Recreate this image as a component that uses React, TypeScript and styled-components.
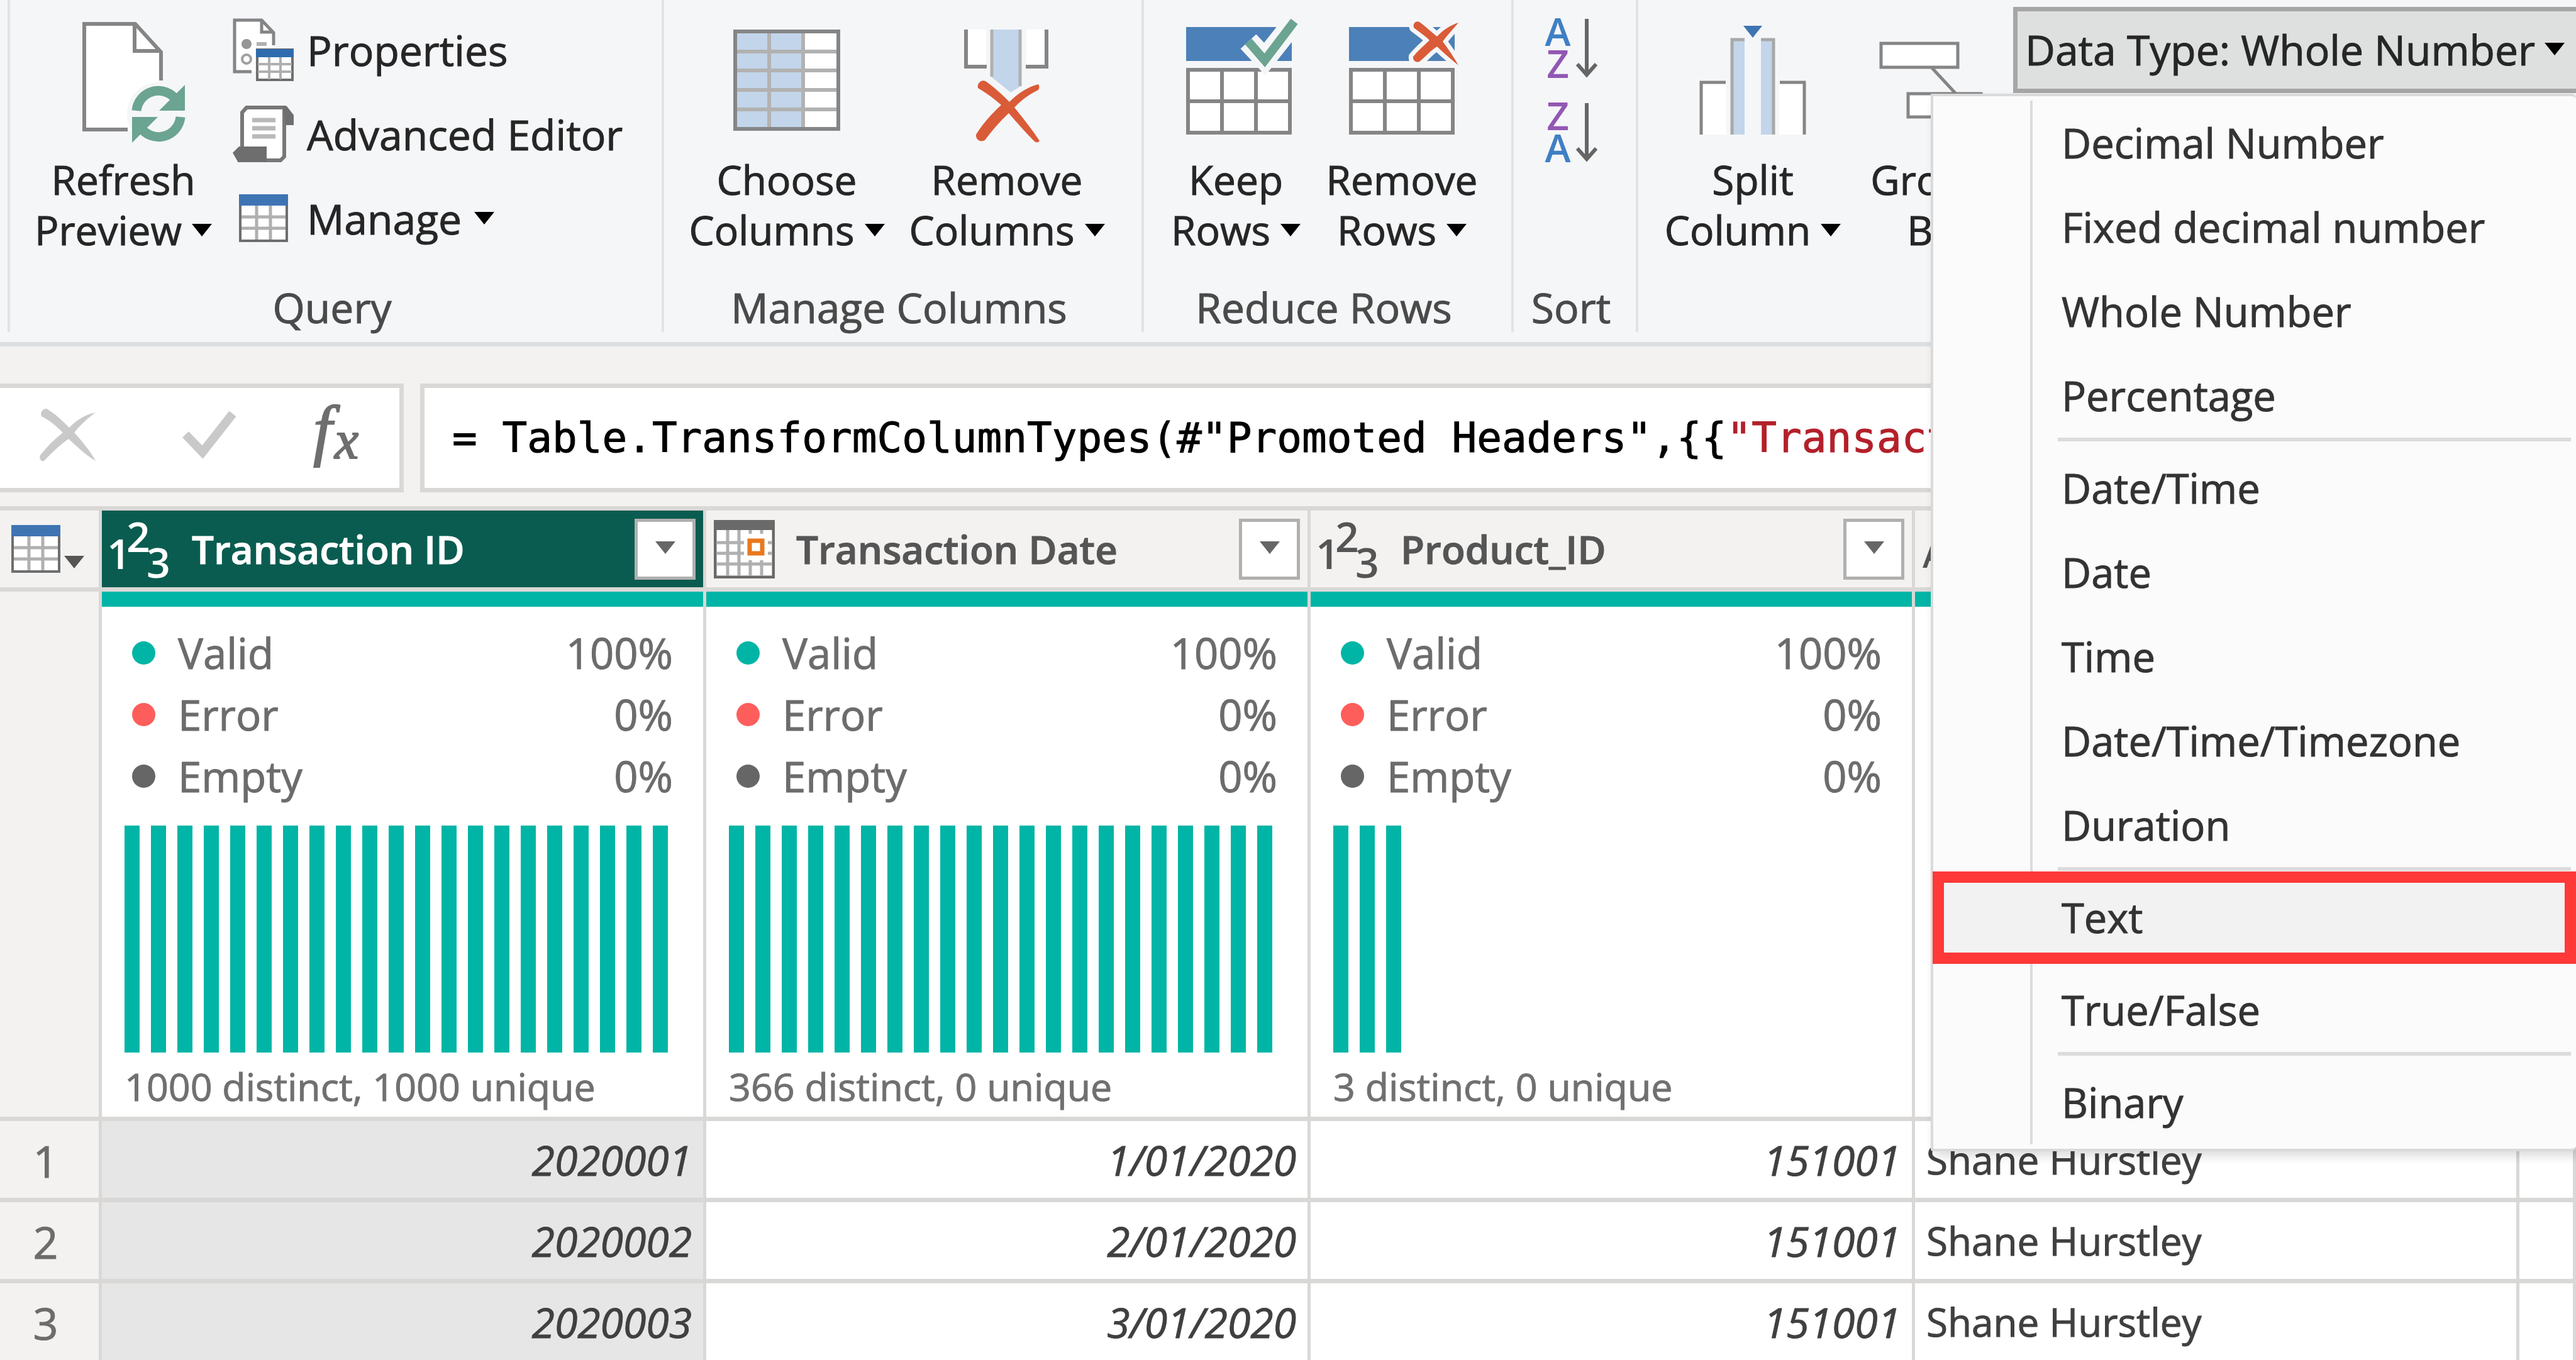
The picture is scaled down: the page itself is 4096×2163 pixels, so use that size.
import React, { useState } from "react";
import styled, { createGlobalStyle } from "styled-components";

const ui = `"Open Sans", "Noto Sans", sans-serif`;
const teal = "#00b5a6";
const line = "#d9d8d6";
const grey = "#858585";
const blue = "#4c80b8";
const pale = "#c2d5ea";

const GlobalStyle = createGlobalStyle`
  * { box-sizing: border-box; }
  body {
    margin: 0;
    background: #f3f2f1;
    font-family: ${ui};
    overflow: hidden;
    -webkit-text-stroke: 1px currentColor;
  }
  button, input { font: inherit; color: inherit; margin: 0; }
  svg { display: block; flex: none; }
`;

const Page = styled.div`
  min-height: 100vh;
  display: flex;
  flex-direction: column;
`;

/* ---------- ribbon ---------- */

const Ribbon = styled.div`
  display: flex;
  height: 551px;
  padding: 0 0 16px 12px;
  background: #f5f6f8;
  border-bottom: 7px solid #dcdfe0;
`;

const Group = styled.section<{ $w?: number }>`
  flex: ${(p) => (p.$w ? `0 0 ${p.$w}px` : "1 0 auto")};
  display: flex;
  flex-direction: column;
  border-left: 4px solid #e0e4e2;
`;

const GroupBody = styled.div<{ $pad: number; $center?: boolean }>`
  flex: 1;
  display: flex;
  align-items: flex-start;
  justify-content: ${(p) => (p.$center ? "center" : "flex-start")};
  padding-left: ${(p) => p.$pad}px;
`;

const GroupLabel = styled.h2`
  margin: 0;
  padding-right: 12px;
  height: 80px;
  font-size: 66px;
  font-weight: 400;
  line-height: 80px;
  text-align: center;
  color: #4a4a4a;
  white-space: nowrap;
`;

const BigButton = styled.button<{ $w: number }>`
  width: ${(p) => p.$w}px;
  padding: 0;
  border: 0;
  background: none;
  display: flex;
  flex-direction: column;
  align-items: center;
  font-size: 64px;
  line-height: 80px;
  color: #262626;
  white-space: nowrap;
`;

const LabelLine = styled.span`
  display: flex;
  align-items: center;
  gap: 16px;
`;

const SmallList = styled.div`
  display: flex;
  flex-direction: column;
  padding: 12px 0 0 24px;
`;

const SmallButton = styled.button`
  height: 134px;
  padding: 0;
  border: 0;
  background: none;
  display: flex;
  align-items: center;
  gap: 20px;
  font-size: 66px;
  line-height: 80px;
  color: #262626;
  white-space: nowrap;
`;

const IconSlot = styled.span`
  width: 98px;
  display: flex;
  justify-content: center;
`;

const SortList = styled.div`
  display: flex;
  flex-direction: column;
  gap: 36px;
  padding: 28px 12px 0 0;
`;

const IconButton = styled.button`
  padding: 0;
  border: 0;
  background: none;
`;

const TypeArea = styled.div`
  position: relative;
  flex: 1;
  padding-top: 11px;
`;

const TypeButton = styled.button`
  width: 100%;
  height: 137px;
  padding: 0 18px 4px 12px;
  border: 7px solid #a6a6a6;
  border-right: 0;
  background: #dedfdf;
  display: flex;
  align-items: center;
  justify-content: space-between;
  font-size: 66px;
  line-height: 80px;
  color: #262626;
  white-space: nowrap;
`;

/* ---------- drop-down menu ---------- */

const Menu = styled.ul`
  position: absolute;
  z-index: 2;
  top: 149px;
  left: -131px;
  right: 0;
  margin: 0;
  padding: 7px 0;
  list-style: none;
  border: 4px solid #dadada;
  border-right: 0;
  border-radius: 0 8px 8px 4px;
  background: linear-gradient(#dcdcdc, #dcdcdc) 154px 7px / 4px calc(100% - 14px) no-repeat #fbfbfb;
  box-shadow: 6px 8px 16px rgba(0, 0, 0, 0.14);
`;

const MenuItem = styled.li`
  position: relative;
`;

const MenuButton = styled.button<{ $hot: boolean }>`
  display: block;
  width: 100%;
  height: 134px;
  padding: 0 0 0 204px;
  border: 0;
  background: ${(p) => (p.$hot ? "#f2f2f2" : "none")};
  font-size: 65px;
  line-height: 132px;
  text-align: left;
  color: #333;
  white-space: nowrap;
`;

const Divider = styled.li`
  height: 13px;
  margin: 0 8px 0 198px;
  border-top: 6px solid #dcdcdc;
`;

const Highlight = styled.span`
  position: absolute;
  inset: -6px 0 -7px -1px;
  border: 18px solid #ff3838;
  pointer-events: none;
`;

/* ---------- formula bar ---------- */

const FormulaBar = styled.div`
  display: flex;
  gap: 26px;
  height: 173px;
  margin: 59px 0 22px;
`;

const FormulaTools = styled.div`
  display: flex;
  align-items: center;
  gap: 118px;
  width: 642px;
  padding: 0 0 10px 62px;
  border: 7px solid ${line};
  border-left: 0;
  background: #fff;
`;

const FormulaBox = styled.label`
  flex: 1;
  display: grid;
  align-items: center;
  border: 7px solid ${line};
  border-right: 0;
  background: #fff;
  padding-left: 44px;
  overflow: hidden;
  font: 66px/80px "DejaVu Sans Mono", "Liberation Mono", monospace;
  white-space: pre;
`;

const FormulaInput = styled.input`
  grid-area: 1 / 1;
  min-width: 0;
  padding: 0;
  border: 0;
  outline: 0;
  background: none;
  color: transparent;
  caret-color: #000;
  -webkit-text-stroke: 0;
`;

const FormulaText = styled.span`
  grid-area: 1 / 1;
  min-width: 0;
  color: #000;
  pointer-events: none;
`;

const StringLiteral = styled.span`
  color: #b3202a;
  -webkit-text-stroke: 1px #b3202a;
`;

/* ---------- grid ---------- */

const Grid = styled.table`
  width: 100%;
  table-layout: fixed;
  border-collapse: separate;
  border-spacing: 0;
  border-top: 7px solid ${line};
  background: #fff;
`;

const Col = styled.col<{ $w?: number }>`
  width: ${(p) => (p.$w ? `${p.$w}px` : "auto")};
`;

const HeadCell = styled.th<{ $selected?: boolean }>`
  height: 129px;
  padding: 0;
  border-right: 5px solid ${line};
  border-bottom: 7px solid ${line};
  background: ${(p) => (p.$selected ? "#0a5c50" : "#f3f2f1")};
  color: ${(p) => (p.$selected ? "#fff" : "#555")};
  font-size: 62px;
  font-weight: 600;
  line-height: 80px;
  text-align: left;
`;

const HeadInner = styled.div`
  display: flex;
  align-items: center;
  padding: 0 12px;
  white-space: nowrap;
  overflow: hidden;
`;

const HeadName = styled.span`
  flex: 1;
  padding-left: 34px;
`;

const FilterButton = styled.button`
  width: 97px;
  height: 97px;
  padding: 0 0 4px;
  border: 5px solid #b0b0b0;
  background: #fff;
  display: flex;
  align-items: center;
  justify-content: center;
`;

const CornerButton = styled.button`
  display: flex;
  align-items: flex-end;
  gap: 6px;
  padding: 0 0 0 18px;
  border: 0;
  background: none;

  svg:last-child {
    margin-bottom: 7px;
  }
`;

const ProfileCell = styled.td`
  height: 842px;
  padding: 0;
  vertical-align: top;
  border-right: 5px solid ${line};
  border-bottom: 7px solid ${line};
`;

const QualityBar = styled.div`
  height: 24px;
  background: ${teal};
`;

const Quality = styled.dl`
  margin: 0;
  padding: 24px 48px 0;
`;

const QualityRow = styled.div`
  display: flex;
  align-items: center;
  height: 98px;
  font-size: 67px;
  line-height: 80px;
  color: #6c6c6c;
`;

const Dot = styled.span<{ $color: string }>`
  width: 37px;
  height: 37px;
  border-radius: 50%;
  background: ${(p) => p.$color};
`;

const QualityName = styled.dt`
  flex: 1;
  padding-left: 36px;
`;

const QualityValue = styled.dd`
  margin: 0;
`;

const Bars = styled.div`
  display: flex;
  gap: 18px;
  height: 361px;
  margin: 30px 36px 0;
`;

const Bar = styled.span`
  width: 24px;
  background: ${teal};
`;

const Distinct = styled.p`
  margin: 14px 0 0;
  padding-left: 36px;
  font-size: 61px;
  line-height: 80px;
  color: #707070;
  white-space: nowrap;
`;

const RowHead = styled.th`
  height: 129px;
  padding: 4px 12px 0 0;
  border-right: 5px solid ${line};
  border-bottom: 7px solid ${line};
  background: #f3f2f1;
  font-size: 70px;
  font-weight: 400;
  line-height: 80px;
  text-align: center;
  color: #6c6c6c;
`;

const Cell = styled.td<{ $selected?: boolean; $number?: boolean }>`
  height: 129px;
  padding: 0 18px;
  border-right: 5px solid ${line};
  border-bottom: 7px solid ${line};
  background: ${(p) => (p.$selected ? "#e6e6e6" : "#fff")};
  font-size: ${(p) => (p.$number ? 66 : 62)}px;
  line-height: 80px;
  font-style: ${(p) => (p.$number ? "italic" : "normal")};
  text-align: ${(p) => (p.$number ? "right" : "left")};
  color: #404040;
  white-space: nowrap;
`;

/* ---------- icons ---------- */

const Caret = ({ color = "#000" }: { color?: string }) => (
  <svg width="32" height="20" viewBox="0 0 32 20" aria-hidden="true">
    <path d="M0 0H32L16 20Z" fill={color} />
  </svg>
);

const TableIcon = () => (
  <svg width="78" height="76" viewBox="0 0 78 76" aria-hidden="true">
    <rect x="2" y="2" width="74" height="72" fill="#fff" stroke="#6e6e6e" strokeWidth="4" />
    <path d="M28 18V72M50 18V72M4 36H74M4 54H74" stroke="#b0b0b0" strokeWidth="5" />
    <rect width="78" height="18" fill="#3f74b3" />
  </svg>
);

const RefreshIcon = () => (
  <svg width="202" height="246" viewBox="-34 0 202 246" aria-hidden="true">
    <path d="M86 208H5V38H86L127 83V210H86" fill="#fff" />
    <circle cx="123" cy="181" r="50" fill="#f5f6f8" />
    <path d="M74 206H5V38H86L127 83V128M85 38V81H127" fill="none" stroke={grey} strokeWidth="6" />
    <g fill="none" stroke="#6ba491" strokeWidth="15">
      <path d="M88 176A35 35 0 0 1 152 160" />
      <path d="M158 186A35 35 0 0 1 94 202" />
    </g>
    <path d="M165 135V176H124ZM81 227V186H122Z" fill="#6ba491" />
  </svg>
);

const PropertiesIcon = () => (
  <svg width="98" height="102" viewBox="0 0 98 102" aria-hidden="true">
    <path d="M32 86H3V4H46L65 24V50H36V86" fill="#fff" />
    <path d="M30 86H3V4H46L65 24V44M46 4V23H64" fill="none" stroke={grey} strokeWidth="5" />
    <circle cx="22" cy="42" r="8" fill="#959595" />
    <circle cx="22" cy="66" r="7" fill="none" stroke="#a0a0a0" strokeWidth="4" />
    <path d="M38 42H54" stroke="#b0b0b0" strokeWidth="6" />
    <rect x="39" y="51" width="56" height="48" fill="#fff" stroke="#6e6e6e" strokeWidth="4" />
    <path d="M58 62V98M76 62V98M40 74H94M40 86H94" stroke="#b0b0b0" strokeWidth="4" />
    <rect x="37" y="50" width="60" height="13" fill="#2f6cae" />
  </svg>
);

const ScriptIcon = () => (
  <svg width="98" height="92" viewBox="0 0 98 92" aria-hidden="true">
    <path d="M15 66V12L22 4H82V82L76 88H8" fill="#fff" stroke="#777" strokeWidth="6" />
    <path d="M80 2H86L97 16V32H84ZM0 76L10 66H54V90H8Z" fill="#6e6e6e" />
    <path d="M31 24H68M31 37H68M31 50H68" stroke="#b8b8b8" strokeWidth="7" />
  </svg>
);

const ChooseIcon = () => (
  <svg width="170" height="246" viewBox="0 0 170 246" aria-hidden="true">
    <rect x="3" y="50" width="164" height="155" fill="#fff" />
    <rect x="3" y="50" width="108" height="155" fill={pale} />
    <path d="M57 50V205M111 50V205M3 82H167M3 112H167M3 143H167M3 174H167" stroke="#b2b2b2" strokeWidth="6" />
    <rect x="3" y="50" width="164" height="155" fill="none" stroke={grey} strokeWidth="6" />
  </svg>
);

const RemoveColumnsIcon = () => (
  <svg width="136" height="246" viewBox="0 0 136 246" aria-hidden="true">
    <path d="M3 47V106H35V47ZM131 47V106H99V47Z" fill="#fff" />
    <path d="M3 47V106H36M131 47V106H98" fill="none" stroke={grey} strokeWidth="6" />
    <path d="M43 47H90V137L74 147L43 122Z" fill={pale} />
    <path d="M44 47V122M89 47V137" stroke="#b0b0b0" strokeWidth="5" />
    <path d="M34 129C50 140 64 154 72 162C86 148 102 138 118 134C120 137 120 140 118 143C104 150 92 158 80 171C94 188 108 206 120 224C118 227 115 227 112 225C98 211 84 195 71 180C57 193 44 208 33 223C26 227 18 222 19 214C30 196 44 181 59 167C47 156 34 147 22 140C20 133 27 126 34 129Z" fill="#da5b38" />
  </svg>
);

const RowsGrid = () => (
  <>
    <path d="M3 111H165V211H3Z" fill="#fff" />
    <path d="M3 111H165V211H3ZM57 111V211M111 111V211M3 161H165" fill="none" stroke={grey} strokeWidth="6" />
    <rect x="0" y="43" width="168" height="54" fill={blue} />
  </>
);

const KeepRowsIcon = () => (
  <svg width="198" height="246" viewBox="-20 0 198 246" aria-hidden="true">
    <RowsGrid />
    <path d="M99 66L125 94L174 32" fill="none" stroke="#f5f6f8" strokeWidth="34" />
    <path d="M99 66L125 96L172 34" fill="none" stroke="#6ba491" strokeWidth="14" />
  </svg>
);

const RemoveRowsIcon = () => (
  <svg width="187" height="246" viewBox="-9 0 187 246" aria-hidden="true">
    <RowsGrid />
    <path
      d="M112 35C122 42 132 52 140 58C150 47 162 40 174 36C166 46 156 56 149 66C158 78 166 90 174 104C162 94 150 84 140 74C130 80 122 90 112 98C106 100 101 96 102 90C110 80 120 72 128 64C120 56 110 50 103 44C101 38 106 32 112 35Z"
      fill="#da5b38"
      stroke="#f5f6f8"
      strokeWidth="14"
      paintOrder="stroke"
    />
  </svg>
);

const SortIcon = ({ first, second }: { first: string; second: string }) => (
  <svg width="84" height="98" viewBox="0 0 84 98" fontFamily="Open Sans, sans-serif" fontWeight="600" fontSize="62" textAnchor="middle" aria-hidden="true">
    <text x="21" y="45" fill={first === "A" ? "#3f7fc4" : "#9257b4"}>{first}</text>
    <text x="21" y="96" fill={second === "A" ? "#3f7fc4" : "#9257b4"}>{second}</text>
    <path d="M67 2V92M52 74L67 91L82 74" fill="none" stroke="#666" strokeWidth="6" />
  </svg>
);

const SplitIcon = () => (
  <svg width="172" height="246" viewBox="0 0 172 246" aria-hidden="true">
    <path d="M4 131H44V214H4ZM168 131H128V214H168Z" fill="#fff" />
    <path d="M4 214V131H43M168 214V131H129" fill="none" stroke={grey} strokeWidth="5" />
    <path d="M51 63H73V214H51ZM99 63H121V214H99Z" fill={pale} />
    <path d="M53 214V63H73M119 214V63H99" fill="none" stroke="#a8a8a8" strokeWidth="5" />
    <path d="M71 41H101L86 60Z" fill="#3f74b3" />
  </svg>
);

const GroupIcon = () => (
  <svg width="168" height="246" viewBox="0 0 168 246" fill="#fff" stroke={grey} strokeWidth="5" aria-hidden="true">
    <path d="M86 107L124 148" />
    <rect x="6" y="69" width="122" height="38" />
    <rect x="49" y="149" width="116" height="37" />
  </svg>
);

const CancelIcon = () => (
  <svg width="92" height="84" viewBox="0 0 92 84" aria-hidden="true">
    <path d="M12 0C26 8 38 20 48 30C60 18 74 9 90 6C76 16 65 27 56 38C69 52 81 67 90 83C75 74 60 60 47 48C33 58 20 70 8 83C2 84 0 79 2 74C13 60 25 48 38 38C27 27 16 18 4 12C1 6 6 0 12 0Z" fill="#c9c9c9" />
  </svg>
);

const CheckIcon = () => (
  <svg width="104" height="78" viewBox="-18 0 104 78" aria-hidden="true">
    <path d="M5 38L32 66L80 5" fill="none" stroke="#c9c9c9" strokeWidth="14" />
  </svg>
);

const FxIcon = () => (
  <svg width="84" height="104" viewBox="0 0 84 104" fontFamily="Liberation Serif, serif" fontStyle="italic" fill="#6e6e6e" stroke="#6e6e6e" strokeWidth="2" aria-hidden="true">
    <text x="4" y="80" fontSize="108">f</text>
    <text x="38" y="89" fontSize="86">x</text>
  </svg>
);

const WholeNumberIcon = () => (
  <svg width="97" height="97" viewBox="0 0 97 97" fontFamily="Open Sans, sans-serif" fontWeight="600" fontSize="66" fill="currentColor" aria-hidden="true">
    <text x="-4" y="80">1</text>
    <text x="27" y="53">2</text>
    <text x="59" y="94">3</text>
  </svg>
);

const TextTypeIcon = () => (
  <svg width="97" height="97" viewBox="0 0 97 97" fontFamily="Open Sans, sans-serif" fontWeight="600" fill="currentColor" aria-hidden="true">
    <text x="0" y="78" fontSize="56">A</text>
    <text x="38" y="50" fontSize="48">B</text>
    <text x="62" y="90" fontSize="48">C</text>
  </svg>
);

const DateIcon = () => (
  <svg width="97" height="93" viewBox="0 0 97 93" aria-hidden="true">
    <rect x="2" y="2" width="93" height="89" fill="#fff" stroke="#6a6a6a" strokeWidth="5" />
    <path d="M22 16V89M40 16V89M58 16V89M76 16V89M4 36H93M4 53H93M4 70H93" stroke="#b0b0b0" strokeWidth="5" />
    <rect width="97" height="16" fill="#6a6a6a" />
    <rect x="48" y="22" width="38" height="42" fill="#fff" />
    <rect x="57" y="33" width="20" height="20" fill="#fff" stroke="#e8791e" strokeWidth="7" />
  </svg>
);

/* ---------- data ---------- */

const typeGroups = [
  ["Decimal Number", "Fixed decimal number", "Whole Number", "Percentage"],
  ["Date/Time", "Date", "Time", "Date/Time/Timezone", "Duration"],
  ["Text"],
  ["True/False"],
  ["Binary"],
];

const columns = [
  { name: "Transaction ID", icon: <WholeNumberIcon />, bars: 21, distinct: "1000 distinct, 1000 unique" },
  { name: "Transaction Date", icon: <DateIcon />, bars: 21, distinct: "366 distinct, 0 unique" },
  { name: "Product_ID", icon: <WholeNumberIcon />, bars: 3, distinct: "3 distinct, 0 unique" },
];

const quality = [
  { name: "Valid", value: "100%", color: teal },
  { name: "Error", value: "0%", color: "#fd5e5b" },
  { name: "Empty", value: "0%", color: "#666" },
];

const rows = [
  ["2020001", "1/01/2020", "151001", "Shane Hurstley"],
  ["2020002", "2/01/2020", "151001", "Shane Hurstley"],
  ["2020003", "3/01/2020", "151001", "Shane Hurstley"],
];

const Big = ({ w, icon, top, bottom, menu = true }: { w: number; icon: React.ReactNode; top: string; bottom: string; menu?: boolean }) => (
  <BigButton type="button" $w={w}>
    {icon}
    <LabelLine>{top}</LabelLine>
    <LabelLine>
      {bottom}
      {menu && <Caret />}
    </LabelLine>
  </BigButton>
);

const initialFormula = `= Table.TransformColumnTypes(#"Promoted Headers",{{"Transact`;

export default function App() {
  const [formula, setFormula] = useState(initialFormula);
  const parts = formula.split(/((?<=\{)"[^"]*"?)/);

  return (
    <Page>
      <GlobalStyle />
      <Ribbon>
        <Group $w={1040}>
          <GroupBody $pad={30}>
            <Big w={300} icon={<RefreshIcon />} top="Refresh" bottom="Preview" />
            <SmallList>
              <SmallButton type="button"><IconSlot><PropertiesIcon /></IconSlot>Properties</SmallButton>
              <SmallButton type="button"><IconSlot><ScriptIcon /></IconSlot>Advanced Editor</SmallButton>
              <SmallButton type="button"><IconSlot><TableIcon /></IconSlot>Manage <Caret /></SmallButton>
            </SmallList>
          </GroupBody>
          <GroupLabel>Query</GroupLabel>
        </Group>
        <Group $w={763}>
          <GroupBody $pad={20}>
            <Big w={350} icon={<ChooseIcon />} top="Choose" bottom="Columns" />
            <Big w={350} icon={<RemoveColumnsIcon />} top="Remove" bottom="Columns" />
          </GroupBody>
          <GroupLabel>Manage Columns</GroupLabel>
        </Group>
        <Group $w={588}>
          <GroupBody $pad={14}>
            <Big w={264} icon={<KeepRowsIcon />} top="Keep" bottom="Rows" />
            <Big w={264} icon={<RemoveRowsIcon />} top="Remove" bottom="Rows" />
          </GroupBody>
          <GroupLabel>Reduce Rows</GroupLabel>
        </Group>
        <Group $w={198}>
          <GroupBody $pad={0} $center>
            <SortList>
              <IconButton type="button" aria-label="Sort ascending"><SortIcon first="A" second="Z" /></IconButton>
              <IconButton type="button" aria-label="Sort descending"><SortIcon first="Z" second="A" /></IconButton>
            </SortList>
          </GroupBody>
          <GroupLabel>Sort</GroupLabel>
        </Group>
        <Group>
          <GroupBody $pad={32}>
            <Big w={300} icon={<SplitIcon />} top="Split" bottom="Column" />
            <Big w={264} icon={<GroupIcon />} top="Group" bottom="By" menu={false} />
            <TypeArea>
              <TypeButton type="button" aria-haspopup="menu" aria-expanded="true">
                Data Type: Whole Number <Caret />
              </TypeButton>
              <Menu role="menu">
                {typeGroups.map((group, g) => (
                  <React.Fragment key={g}>
                    {g > 0 && <Divider role="separator" />}
                    {group.map((name) => (
                      <MenuItem key={name} role="none">
                        <MenuButton type="button" role="menuitem" $hot={name === "Text"}>{name}</MenuButton>
                        {name === "Text" && <Highlight />}
                      </MenuItem>
                    ))}
                  </React.Fragment>
                ))}
              </Menu>
            </TypeArea>
          </GroupBody>
        </Group>
      </Ribbon>

      <FormulaBar>
        <FormulaTools>
          <IconButton type="button" aria-label="Cancel"><CancelIcon /></IconButton>
          <IconButton type="button" aria-label="Commit"><CheckIcon /></IconButton>
          <IconButton type="button" aria-label="Insert step"><FxIcon /></IconButton>
        </FormulaTools>
        <FormulaBox>
          <FormulaText aria-hidden="true">
            {parts.map((part, i) => (i % 2 ? <StringLiteral key={i}>{part}</StringLiteral> : part))}
          </FormulaText>
          <FormulaInput aria-label="Formula" spellCheck={false} value={formula} onChange={(e) => setFormula(e.target.value)} />
        </FormulaBox>
      </FormulaBar>

      <Grid>
        <colgroup>
          <Col $w={162} />
          <Col $w={961} />
          <Col $w={961} />
          <Col $w={961} />
          <Col $w={961} />
          <Col />
        </colgroup>
        <thead>
          <tr>
            <HeadCell>
              <CornerButton type="button" aria-label="Table options"><TableIcon /><Caret color="#555" /></CornerButton>
            </HeadCell>
            {columns.map((c, i) => (
              <HeadCell key={c.name} scope="col" $selected={i === 0}>
                <HeadInner>
                  {c.icon}
                  <HeadName>{c.name}</HeadName>
                  <FilterButton type="button" aria-label={`Filter ${c.name}`}><Caret color="#666" /></FilterButton>
                </HeadInner>
              </HeadCell>
            ))}
            <HeadCell scope="col"><HeadInner><TextTypeIcon /></HeadInner></HeadCell>
            <HeadCell />
          </tr>
        </thead>
        <tbody>
          <tr>
            <RowHead />
            {columns.map((c) => (
              <ProfileCell key={c.name}>
                <QualityBar />
                <Quality>
                  {quality.map((q) => (
                    <QualityRow key={q.name}>
                      <Dot $color={q.color} />
                      <QualityName>{q.name}</QualityName>
                      <QualityValue>{q.value}</QualityValue>
                    </QualityRow>
                  ))}
                </Quality>
                <Bars>{Array.from({ length: c.bars }, (_, i) => <Bar key={i} />)}</Bars>
                <Distinct>{c.distinct}</Distinct>
              </ProfileCell>
            ))}
            <ProfileCell><QualityBar /></ProfileCell>
            <ProfileCell><QualityBar /></ProfileCell>
          </tr>
          {rows.map((row, r) => (
            <tr key={r}>
              <RowHead scope="row">{r + 1}</RowHead>
              {row.map((value, i) => (
                <Cell key={i} $selected={i === 0} $number={i < 3}>{value}</Cell>
              ))}
              <Cell />
            </tr>
          ))}
        </tbody>
      </Grid>
    </Page>
  );
}
